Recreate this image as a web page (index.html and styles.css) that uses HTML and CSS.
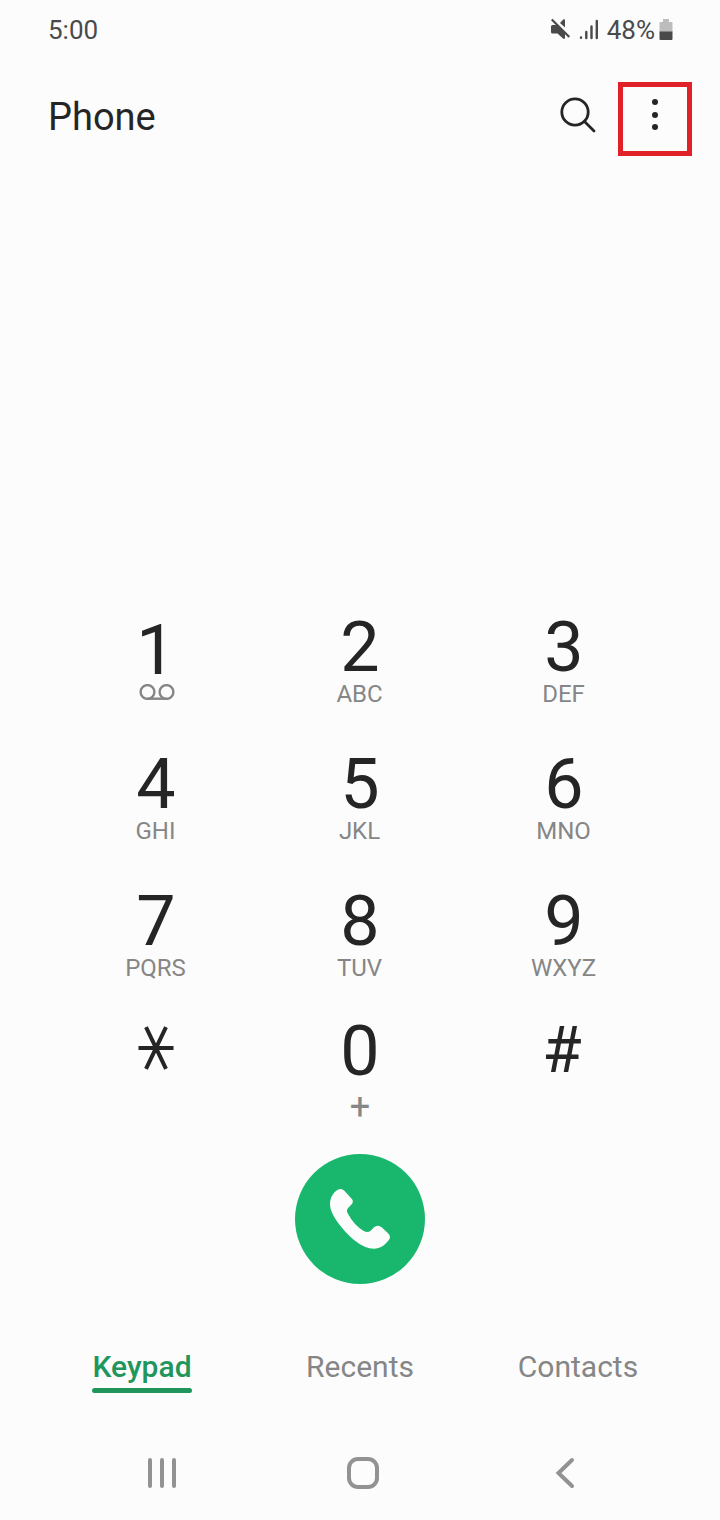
FILE: index.html
```html
<!DOCTYPE html>
<html lang="en">
<head>
    <meta charset="UTF-8">
    <meta name="viewport" content="width=device-width, initial-scale=1.0">
    <title>Phone</title>
    <link rel="stylesheet" href="styles.css">
</head>
<body>
    <div class="wrap">
        <div class="status">
            <span class="time">5:00</span>
            <div class="statusIcons">
                <svg class="mute" width="20" height="22" viewBox="0 0 20 22">
                    <path d="M1.500 7H6L14 14.500V20q-.5 1.500-2 .5L6.500 15.500H1.500Q0 15.500 0 14V8.500Q0 7 1.500 7z M9 5L12.500 1.300q1.500-.5 1.500 1V9.500z" fill="#4a4a4a"/>
                    <path d="M.8 1.500L18.300 19" stroke="#4a4a4a" stroke-width="2.200"/>
                </svg>
                <svg class="signal" width="20" height="22" viewBox="0 0 20 22">
                    <path d="M2 19.500v.3M7.300 14v6M12.500 8.500V20M17.800 3v17" stroke="#4a4a4a" stroke-width="2.400" stroke-linecap="round"/>
                </svg>
                <span class="percent">48%</span>
                <svg class="battery" width="14" height="22" viewBox="0 0 14 22">
                    <path d="M4 0h6v3h2.500q1 0 1 1v9H.5V4q0-1 1-1H4z" fill="#bdbdbd"/>
                    <path d="M.5 12.500h13V20q0 1-1 1h-11q-1 0-1-1z" fill="#4a4a4a"/>
                </svg>
            </div>
        </div>

        <div class="header">
            <h1>Phone</h1>
            <svg class="search" width="38" height="38" viewBox="0 0 38 38">
                <circle cx="16" cy="16" r="13.200"/>
                <path d="M25.500 25.500L35 35"/>
            </svg>
            <div class="more">
                <span class="dot"></span>
                <span class="dot"></span>
                <span class="dot"></span>
            </div>
        </div>

        <div class="keypad">
            <div class="key one">
                <span class="num">1</span>
                <svg class="voicemail" width="36" height="16" viewBox="0 0 36 16">
                    <circle cx="8.500" cy="8" r="6.900"/>
                    <circle cx="27.500" cy="8" r="6.900"/>
                    <path d="M8.500 14.700h19"/>
                </svg>
            </div>
            <div class="key"><span class="num">2</span><span class="sub">ABC</span></div>
            <div class="key"><span class="num">3</span><span class="sub">DEF</span></div>
            <div class="key"><span class="num">4</span><span class="sub">GHI</span></div>
            <div class="key"><span class="num">5</span><span class="sub">JKL</span></div>
            <div class="key"><span class="num">6</span><span class="sub">MNO</span></div>
            <div class="key"><span class="num">7</span><span class="sub">PQRS</span></div>
            <div class="key"><span class="num">8</span><span class="sub">TUV</span></div>
            <div class="key"><span class="num">9</span><span class="sub">WXYZ</span></div>
            <div class="key">
                <svg class="star" width="36" height="44" viewBox="0 0 36 44">
                    <path d="M.5 22h35M8 1.200l20 41.600M28 1.200l-20 41.600"/>
                </svg>
            </div>
            <div class="key"><span class="num">0</span><span class="plus">+</span></div>
            <div class="key"><span class="num hash">#</span></div>
        </div>

        <div class="callBtn">
            <svg width="130" height="130" viewBox="45 42 390 390">
                <path d="M182 147Q188 147 193 152L215 176Q222 184 215 193L205 203Q198 210 203 220Q222 256 251 273Q263 279 272 272L282 262Q293 253 305 262L324 280Q335 291 326 301C312 318 300 326 282 326C245 326 208 289 186 263C160 231 150 210 150 191C150 172 162 156 172 150Q177 147 182 147Z" fill="#fcfcfc"/>
            </svg>
        </div>

        <div class="tabs">
            <div class="tab on">Keypad</div>
            <div class="tab">Recents</div>
            <div class="tab">Contacts</div>
        </div>

        <div class="nav">
            <svg width="32" height="36" viewBox="0 0 32 36"><path d="M4 5v26M16 5v26M28 5v26"/></svg>
            <svg class="home" width="36" height="36" viewBox="0 0 36 36"><rect x="4" y="4" width="28" height="28" rx="9"/></svg>
            <svg width="24" height="36" viewBox="0 0 24 36"><path d="M19 5L5.500 18L19 31"/></svg>
        </div>
    </div>
</body>
</html>
```
FILE: styles.css
```css
*{ margin: 0; padding: 0; box-sizing: border-box; }
body{ background: #fcfcfc; font-family: Roboto, "Liberation Sans", sans-serif; color: #252525; }
svg{ display: block; fill: none; }
.wrap{ width: 720px; height: 1520px; overflow: hidden; }

/* status bar */
.status{ display: flex; justify-content: space-between; height: 60px; padding: 15px 47px 0 48px; font-size: 26px; line-height: 30px; color: #4a4a4a; }
.statusIcons{ display: flex; }
.mute{ margin: 3px 8px 0 0; }
.signal{ margin: 3px 8px 0 0; }
.battery{ margin: 4px 0 0 4px; }

/* title */
.header{ display: flex; height: 118px; padding: 22px 28px 0 48px; }
h1{ flex: 1; font-size: 38px; font-weight: 400; line-height: 70px; }
.search{ margin: 14px 21px 0 0; stroke: #252525; stroke-width: 2.8; stroke-linecap: round; }
.more{ display: flex; flex-direction: column; align-items: center; gap: 6.500px; width: 74px; height: 74px; padding-top: 12px; border: 5px solid #e02128; }
.dot{ width: 6px; height: 6px; border-radius: 50%; background: #252525; }

/* keypad */
.keypad{ display: grid; grid-template-columns: repeat(3, 204px); grid-template-rows: 137px 137px 130px 138px; justify-content: center; margin-top: 434px; }
.key{ display: flex; flex-direction: column; align-items: center; }
.num{ font-size: 70px; line-height: 70px; }
.sub{ font-size: 24px; line-height: 24px; padding-right: 1px; color: #868686; }
.one{ padding-top: 3px; }
.voicemail{ margin: -1px 0 0 1px; stroke: #868686; stroke-width: 2.4; }
.star{ margin-top: 10px; stroke: #252525; stroke-width: 4; }
.plus{ font-size: 36px; line-height: 36px; margin-top: 3px; color: #868686; }
.hash{ font-size: 64px; padding-right: 4px; }

.callBtn{ width: 130px; height: 130px; margin: 0 auto; border-radius: 50%; background: #19b76e; }

/* bottom tabs */
.tabs{ display: grid; grid-template-columns: 100px 1fr 122px; margin-top: 65px; padding: 0 81px 0 92px; font-size: 30px; line-height: 36px; color: #868686; }
.tab{ height: 44px; text-align: center; }
.tab:nth-child(2){ padding-left: 11px; }
.on{ font-weight: 500; color: #21965c; }
.on::after{ content: ""; display: block; height: 5px; margin-top: 3px; border-radius: 3px; background: #21965c; }

.nav{ display: flex; justify-content: space-between; margin-top: 62px; padding: 0 143px 0 146px; }
.nav svg{ stroke: #929292; stroke-width: 4; stroke-linecap: round; }
.nav .home{ margin-right: 6px; }
```
